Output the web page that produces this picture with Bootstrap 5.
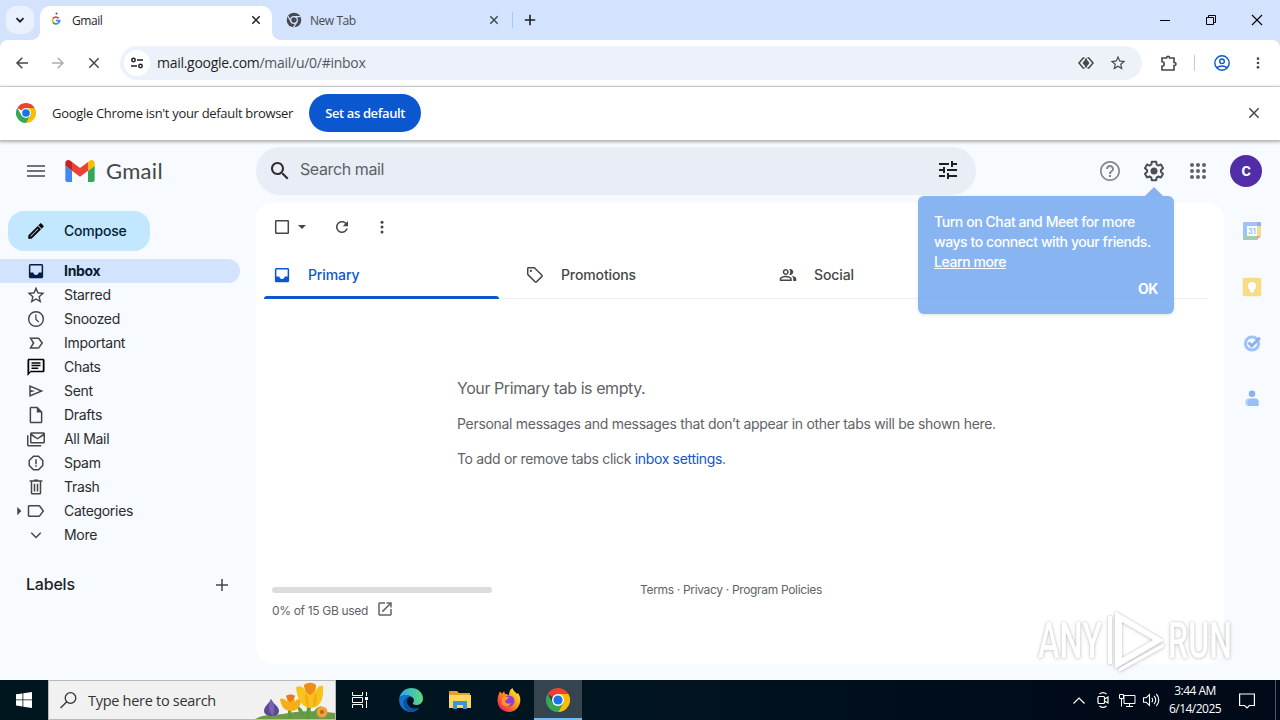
<!DOCTYPE html>
<html lang="en">
<head>
  <meta charset="UTF-8" />
  <meta name="viewport" content="width=device-width, initial-scale=1.0" />
  <title>Gmail</title>
  <link href="https://cdn.jsdelivr.net/npm/bootstrap@5.3.2/dist/css/bootstrap.min.css" rel="stylesheet" />
  <style>
    body { width: 1280px; height: 720px; overflow: hidden; font-family: "Open Sans", sans-serif; color: #1f1f1f; }
    svg { display: block; flex-shrink: 0; fill: currentColor; overflow: visible; }
    .ic-12 { width: 12px; height: 12px; } .ic-16 { width: 16px; height: 16px; }
    .ic-18 { width: 18px; height: 18px; } .ic-20 { width: 20px; height: 20px; }
    .ic-24 { width: 24px; height: 24px; }
    .ln { fill: none; stroke: currentColor; }

    /* browser frame */
    .tabstrip { height: 40px; background: #d3e3fd; font-size: 12px; letter-spacing: -.45px; }
    .tab-list-btn { width: 28px; height: 28px; margin: 6px 6px 0; border-radius: 10px; background: #e9f0fe; }
    .btab { height: 34px; margin-top: 6px; padding-bottom: 6px; }
    .btab-on { position: relative; width: 232px; padding-left: 10px; padding-right: 10px; background: #fff; border-radius: 10px 10px 0 0; }
    .btab-on::before, .btab-on::after { content: ""; position: absolute; bottom: 0; width: 8px; height: 8px; }
    .btab-on::before { left: -8px; background: radial-gradient(circle at 0 0, transparent 7.5px, #fff 8px); }
    .btab-on::after { right: -8px; background: radial-gradient(circle at 100% 0, transparent 7.5px, #fff 8px); }
    .btab-off { width: 240px; padding-left: 14px; padding-right: 12px; color: #474a50; }
    .btab span { padding-top: 1px; }
    .tab-sep { width: 1px; height: 16px; margin-top: 12px; background: #a8c7fa; }
    .win-btn { width: 46px; height: 40px; }
    .frame-bg { background: #d3e3fd; }
    .toolbar { height: 47px; background: #fff; border-radius: 8px 8px 0 0; border-bottom: 1px solid #dfe1e5; color: #474747; }
    .omni { width: 1022px; height: 34px; margin-left: 8px; padding-left: 4px; border-radius: 17px; background: #edf1fa; }
    .site-chip { width: 26px; height: 26px; border-radius: 50%; background: #fff; color: #1f1f1f; }
    .url { font-size: 14px; letter-spacing: -.28px; margin-left: 7px; padding-bottom: 1px; color: #54575b; }
    .url span { color: #1f1f1f; }
    .infobar { height: 53px; padding: 0 20px 1px 16px; font-size: 13px; letter-spacing: -.31px; position: relative; z-index: 1; box-shadow: 0 1px 3px 1px rgba(0,0,0,.3); }
    .btn-default { width: 112px; height: 38px; margin-left: 16px; padding: 1px 0 0; border-radius: 19px; background: #0b57d0; color: #fff; font-size: 13px; font-weight: 600; letter-spacing: -.38px; }

    /* mail app */
    .app { height: 540px; background: #f7fafe; font-family: Inter, sans-serif; font-size: 14px; letter-spacing: -.3px; }
    .app-head { height: 63px; padding-bottom: 2px; }
    .brand { width: 256px; padding-left: 27px; color: #444746; }
    .brand-name { font: 22px Lato, sans-serif; letter-spacing: .3px; margin-left: 11px; color: #444746; }
    .searchbox { width: 720px; height: 48px; padding: 0 16px 0 12px; border-radius: 24px; background: #e9edf6; font-size: 16px; letter-spacing: -.4px; color: #5c6166; }
    .avatar { width: 32px; height: 32px; border-radius: 50%; background: #512da8; color: #fff; font-size: 17px; font-weight: 600; line-height: 1; }
    .side { width: 256px; }
    .btn-compose { width: 142px; height: 40px; margin: 8px 0 8px 8px; padding: 0 0 1px 17px; border-radius: 16px; background: #c2e7ff; color: #001d35; font-weight: 500; font-size: 14px; letter-spacing: -.2px; }
    .folder { width: 240px; height: 24px; padding-left: 27px; color: #2a2c2f; }
    .folder svg { margin-right: 19px; color: #444746; }
    .folder span { padding-bottom: 1px; }
    .folder-on { background: #d3e3fd; border-radius: 0 12px 12px 0; font-weight: 700; color: #001d35; }
    .folder-on svg { color: #041e49; }
    .labels-head { height: 24px; margin-top: 25px; padding: 0 28px 0 26px; font-size: 16px; font-weight: 500; letter-spacing: -.2px; }
    .pane { width: 968px; height: 461px; border-radius: 16px; background: #fff; color: #444746; }
    .pane-tools { height: 48px; padding-left: 17px; }
    .inbox-tabs { height: 48px; margin: 0 16px 0 8px; border-bottom: 1px solid #eceff1; font-weight: 500; letter-spacing: -.12px; }
    .inbox-tab { width: 253px; padding-left: 9px; position: relative; }
    .inbox-tab svg { margin-right: 17px; }
    .inbox-tab-on { color: #0b57d0; }
    .inbox-tab-on::after { content: ""; position: absolute; left: 0; bottom: -1px; width: 235px; height: 3px; border-radius: 3px 3px 0 0; background: #0b57d0; }
    .empty-msg { padding: 77px 0 0 201px; color: #5f6368; line-height: 24px; }
    .empty-msg p { margin-bottom: 11px; letter-spacing: -.3px; }
    .empty-msg .headline { font-size: 16px; letter-spacing: -.43px; margin-bottom: 12px; }
    .empty-msg .hint { letter-spacing: -.33px; }
    .empty-msg a { color: #1155cc; text-decoration: none; }
    .pane-foot { margin-top: 110px; padding-left: 16px; font-size: 12px; letter-spacing: -.33px; color: #5f6368; line-height: 16px; }
    .quota { width: 220px; height: 6px; border-radius: 3px; background: #dadce0; margin-top: 6px; }
    .terms { margin: 1px 0 0 148px; }
    .rail { width: 56px; padding-top: 18px; gap: 36px; opacity: .48; }
    .callout { position: absolute; left: 918px; top: 196px; z-index: 2; width: 256px; height: 118px; padding: 16px; border-radius: 6px; background: rgba(119,170,240,.88); color: #fff; font-family: Inter, sans-serif; font-size: 14px; font-weight: 500; line-height: 20px; letter-spacing: -.42px; box-shadow: 0 1px 3px rgba(60,64,67,.15); }
    .callout::before { content: ""; position: absolute; left: 227px; top: -9px; border: 9px solid transparent; border-top: 0; border-bottom-color: #86b1f1; }
    .callout a { color: #fff; }
    .watermark { position: absolute; left: 1036px; top: 608px; z-index: 3; fill: #fff; opacity: .85; filter: drop-shadow(0 0 1px rgba(0,0,0,.26)) drop-shadow(0 1px 2px rgba(0,0,0,.14)); }

    /* desktop taskbar */
    .taskbar { height: 40px; background: linear-gradient(90deg, #00161f, #00141f 50%, #000a18 85%); color: #fff; }
    .tb-search { width: 288px; height: 40px; background: #f1f1f1; border: 1px solid #b9b9b9; padding-left: 11px; color: #333; font-size: 14.5px; letter-spacing: -.29px; }
    .tb-search span { margin-left: 11px; padding-top: 1px; }
    .tb-start, .tb-view { width: 48px; }
    .tb-view { margin-right: 2px; }
    .tb-item { width: 49px; }
    .tb-on { width: 48px; margin-left: 1px; background: #35444e; border-bottom: 2px solid #76b9ed; padding-top: 2px; }
    .clock { width: 62px; font-size: 12px; letter-spacing: -.52px; line-height: 18px; }
  </style>
</head>
<body class="d-flex flex-column">

  <svg width="0" height="0" class="position-absolute">
    <defs>
      <symbol id="chrome" viewBox="0 0 24 24">
        <path fill="#ea4335" d="M12 12 1.6 6A12 12 0 0 1 22.4 6z" />
        <path fill="#fbbc04" d="M12 12V6h10.4A12 12 0 0 1 12 24l5.2-9z" />
        <path fill="#34a853" d="M12 12 6.8 15 1.6 6A12 12 0 0 0 12 24l5.2-9z" />
        <circle cx="12" cy="12" r="6" fill="#fff" /><circle cx="12" cy="12" r="4.6" fill="#1a73e8" />
      </symbol>
      <symbol id="inbox" viewBox="0 0 24 24"><path d="M19.500 2.500h-15a2 2 0 0 0-2 2v15c0 1.100.9 2 2 2h15c1.100 0 2-.9 2-2v-15c0-1.100-.9-2-2-2zm0 11.500h-4c0 1.900-1.500 3.300-3.500 3.300S8.500 15.900 8.500 14h-4V4.500h15z" /></symbol>
      <symbol id="dots" viewBox="0 0 24 24"><circle cx="12" cy="5.500" r="2" /><circle cx="12" cy="12" r="2" /><circle cx="12" cy="18.500" r="2" /></symbol>
      <symbol id="cross" viewBox="0 0 12 12"><path d="M2.300 2.300l7.400 7.400M9.700 2.300l-7.400 7.400" fill="none" stroke="currentColor" stroke-width="1.500" /></symbol>
      <symbol id="star" viewBox="0 0 24 24"><path d="M22 9.240l-7.190-.620L12 2 9.190 8.630 2 9.240l5.460 4.730L5.820 21 12 17.270 18.180 21l-1.630-7.030L22 9.240zM12 15.400l-3.760 2.270 1-4.280-3.320-2.880 4.380-.380L12 6.100l1.710 4.040 4.380.380-3.320 2.880 1 4.280L12 15.400z" /></symbol>
    </defs>
  </svg>

  <!-- browser tabs -->
  <div class="tabstrip d-flex">
    <div class="tab-list-btn d-flex align-items-center justify-content-center">
      <svg class="ic-12 ln" viewBox="0 0 12 12" stroke-width="1.8"><path d="M2.500 4.200 6 7.700l3.500-3.500" /></svg>
    </div>
    <div class="btab btab-on d-flex align-items-center">
      <svg width="12" height="16" viewBox="0 0 12 16" class="ln" stroke-width="1.800">
        <path stroke="#ea4335" d="M3 6.500A3.600 3.600 0 0 1 8.600 6.300" /><path stroke="#fbbc04" d="M3 6.500a3.600 3.600 0 0 0-.1 3.800" />
        <path stroke="#34a853" d="M2.900 10.300a3.600 3.600 0 0 0 5.300.8" /><path stroke="#4285f4" d="M6 8.600h3.600a3.600 3.600 0 0 1-1.400 2.500" />
        <circle cx="6.500" cy="1.500" r="1" fill="#3949ab" stroke="none" />
      </svg>
      <span class="flex-grow-1" style="margin-left:10px">Gmail</span>
      <svg class="ic-12"><use href="#cross" /></svg>
    </div>
    <div class="btab btab-off d-flex align-items-center">
      <svg width="16" height="16" viewBox="0 0 24 24">
        <circle cx="12" cy="12" r="11" /><circle cx="12" cy="12" r="5" fill="none" stroke="#d3e3fd" stroke-width="1.800" />
        <path d="M12 7h10M7.700 14.500l-5-8.600M16.300 14.500l-5 8.600" stroke="#d3e3fd" stroke-width="1.800" />
      </svg>
      <span class="ms-2 flex-grow-1">New Tab</span>
      <svg class="ic-12"><use href="#cross" /></svg>
    </div>
    <div class="tab-sep"></div>
    <div class="d-flex align-items-center" style="padding-left:11px">
      <svg class="ic-12 ln" viewBox="0 0 12 12" stroke-width="1.6"><path d="M6 .8v10.400M.8 6h10.400" /></svg>
    </div>
    <div class="d-flex align-items-center ms-auto text-black">
      <div class="win-btn d-flex align-items-center justify-content-center"><svg width="10" height="10" class="ln"><path d="M0 5.500h10" /></svg></div>
      <div class="win-btn d-flex align-items-center justify-content-center"><svg width="10" height="10" class="ln"><path d="M.5 2.500h7v7h-7zM2.500 2.500v-2h7v7h-2" /></svg></div>
      <div class="win-btn d-flex align-items-center justify-content-center"><svg width="10" height="10" class="ln" stroke-width="1.1"><path d="M0 0l10 10M10 0L0 10" /></svg></div>
    </div>
  </div>

  <!-- address bar -->
  <div class="frame-bg">
    <div class="toolbar d-flex align-items-center">
      <svg class="ln ms-3" width="12" height="12" viewBox="0 0 12 12" stroke-width="1.500"><path d="M12 6H1M6.300.7 1 6l5.300 5.300" /></svg>
      <svg class="ln" style="margin-left:24px;color:#adadad" width="12" height="12" viewBox="0 0 12 12" stroke-width="1.500"><path d="M0 6h11M5.700.7 11 6l-5.300 5.300" /></svg>
      <svg class="ln" style="margin-left:25px;margin-right:13px" width="10" height="10" viewBox="0 0 10 10" stroke-width="1.500"><path d="M.3.3l9.400 9.400M9.700.3.3 9.700" /></svg>
      <div class="omni d-flex align-items-center">
        <div class="site-chip d-flex align-items-center justify-content-center">
          <svg class="ln" width="12" height="12" viewBox="0 0 12 12" stroke-width="1.500"><circle cx="2.500" cy="3" r="1.700" /><path d="M6 3h6M0 9h6" /><circle cx="9.500" cy="9" r="1.700" /></svg>
        </div>
        <div class="url flex-grow-1"><span>mail.google.com</span>/mail/u/0/#inbox</div>
        <svg class="ln" width="16" height="14" viewBox="0 0 16 14" stroke-width="1.500"><path d="M6.500 2H5.200L1 7l4.200 5h1.300M9.500 2h1.300L15 7l-4.200 5H9.500" /><path d="M8 3.200 11 7l-3 3.800L5 7zM8 2v10" fill="currentColor" stroke-width="1" /></svg>
        <svg class="ic-18" style="margin:0 15px 0 15px"><use href="#star" /></svg>
      </div>
      <svg class="ln" style="margin-left:19px" width="16" height="16" viewBox="0 0 16 16" stroke-width="1.600"><path d="M1 3h4.500V2.500a1.700 1.700 0 0 1 3.200 0V3H13v4.500h.5a1.500 1.500 0 0 1 0 3H13V15H1v-3.800a2.200 2.200 0 0 0 0-4.400z" /></svg>
      <div style="width:1px;height:16px;margin:0 19px 0 17px;background:#c7cdd8"></div>
      <svg class="ln" width="16" height="16" viewBox="0 0 16 16" stroke-width="1.400" style="color:#0b57d0"><circle cx="8" cy="8" r="7.200" /><circle cx="8" cy="6.300" r="2.300" /><path d="M2.800 12.800c2.800-2.500 7.600-2.500 10.400 0" /></svg>
      <svg class="ic-16" style="margin-left:20px"><use href="#dots" /></svg>
    </div>
  </div>

  <!-- default browser prompt -->
  <div class="infobar bg-white d-flex align-items-center">
    <svg class="ic-20"><use href="#chrome" /></svg>
    <span class="ms-3" style="padding-top:1px">Google Chrome isn't your default browser</span>
    <button class="btn btn-default" type="button">Set as default</button>
    <svg class="ln ms-auto" style="color:#474747;margin-right:1px" width="10" height="10" viewBox="0 0 10 10" stroke-width="1.500"><path d="M.3.3l9.400 9.400M9.700.3.3 9.700" /></svg>
  </div>

  <!-- mail -->
  <div class="app d-flex flex-column">
    <div class="app-head d-flex align-items-center">
      <div class="brand d-flex align-items-center">
        <svg class="ln" width="18" height="12" viewBox="0 0 18 12" stroke-width="1.700"><path d="M0 1h18M0 6h18M0 11h18" /></svg>
        <svg style="margin-left:20px" width="30" height="22" viewBox="52 42 88 66">
          <path fill="#4285f4" d="M58 108h14V74L52 59v43c0 3.320 2.690 6 6 6" />
          <path fill="#34a853" d="M120 108h14c3.320 0 6-2.690 6-6V59l-20 15" />
          <path fill="#fbbc04" d="M120 48v26l20-15v-8c0-7.420-8.470-11.650-14.400-7.200" />
          <path fill="#ea4335" d="M72 74V48l24 18 24-18v26L96 92" />
          <path fill="#c5221f" d="M52 51v8l20 15V48l-5.600-4.200c-5.940-4.450-14.400-.22-14.400 7.200" />
        </svg>
        <span class="brand-name">Gmail</span>
      </div>
      <div class="searchbox d-flex align-items-center">
        <svg class="ic-24" style="color:#2b2d30" viewBox="0 0 24 24"><path d="M15.500 14h-.79l-.28-.27C15.410 12.590 16 11.110 16 9.500 16 5.910 13.090 3 9.500 3S3 5.910 3 9.500 5.910 16 9.500 16c1.610 0 3.090-.59 4.230-1.570l.27.28v.79l5 4.990L20.490 19l-4.990-5zm-6 0C7.010 14 5 11.990 5 9.500S7.010 5 9.500 5 14 7.010 14 9.500 11.990 14 9.500 14z" /></svg>
        <span class="ms-2 flex-grow-1 pb-1">Search mail</span>
        <svg class="ic-24" style="color:#1f1f1f;margin-top:-1px" viewBox="0 0 24 24"><path d="M3 17v2h6v-2H3zM3 5v2h10V5H3zm10 16v-2h8v-2h-8v-2h-2v6h2zM7 9v2H3v2h4v2h2V9H7zm14 4v-2H11v2h10zm-6-4h2V7h4V5h-4V3h-2v6z" /></svg>
      </div>
      <div class="d-flex align-items-center ms-auto" style="gap:20px;margin-right:18px;color:#5f6368">
        <svg class="ic-24" style="color:#80868b" viewBox="0 0 24 24"><path d="M11 18h2v-2h-2v2zm1-16C6.480 2 2 6.480 2 12s4.480 10 10 10 10-4.480 10-10S17.520 2 12 2zm0 18.300c-4.580 0-8.300-3.720-8.300-8.300S7.420 3.700 12 3.700s8.300 3.720 8.300 8.300-3.720 8.300-8.300 8.300zM12 6c-2.210 0-4 1.790-4 4h2c0-1.100.9-2 2-2s2 .9 2 2c0 2-3 1.750-3 5h2c0-2.250 3-2.500 3-5 0-2.210-1.790-4-4-4z" /></svg>
        <svg class="ic-24" style="color:#4b4f52" viewBox="0 0 24 24"><path d="M13.850 22.250h-3.700c-.74 0-1.360-.54-1.450-1.270l-.27-1.890c-.27-.14-.53-.29-.79-.46l-1.800.72c-.7.26-1.470-.03-1.810-.65L2.200 15.530c-.35-.66-.2-1.440.36-1.880l1.530-1.190c-.01-.15-.02-.3-.02-.46 0-.15.01-.31.02-.46l-1.520-1.190c-.59-.45-.74-1.260-.37-1.880l1.850-3.190c.34-.62 1.110-.9 1.790-.63l1.810.73c.26-.17.52-.32.78-.46l.27-1.910c.09-.7.71-1.250 1.440-1.250h3.700c.74 0 1.360.54 1.450 1.270l.27 1.890c.27.14.53.29.79.46l1.800-.72c.71-.26 1.480.03 1.820.65l1.840 3.180c.36.66.2 1.440-.36 1.880l-1.520 1.190c.01.15.02.3.02.46s-.01.31-.02.46l1.520 1.190c.56.45.72 1.230.37 1.860l-1.860 3.220c-.34.62-1.110.9-1.800.63l-1.800-.72c-.26.17-.52.32-.78.46l-.27 1.910c-.1.68-.72 1.220-1.460 1.220zm-3.230-2h2.760l.37-2.550.53-.22c.44-.18.88-.44 1.340-.78l.45-.34 2.380.96 1.380-2.400-2.030-1.580.07-.56c.03-.26.06-.51.06-.78s-.03-.53-.06-.78l-.07-.56 2.030-1.580-1.390-2.400-2.390.96-.45-.35c-.42-.32-.87-.58-1.330-.77l-.52-.22-.37-2.550h-2.760l-.37 2.550-.53.21c-.44.19-.88.44-1.340.79l-.45.33-2.380-.95-1.390 2.390 2.030 1.580-.07.56a7 7 0 0 0-.06.79c0 .26.02.53.06.78l.07.56-2.030 1.580 1.380 2.400 2.390-.96.45.35c.43.33.86.58 1.330.77l.53.22.38 2.550z" /><circle cx="12" cy="12" r="3.500" /></svg>
        <svg class="ic-24" viewBox="0 0 24 24"><g id="apps"></g></svg>
        <div class="avatar d-flex align-items-center justify-content-center">c</div>
      </div>
    </div>

    <div class="d-flex flex-grow-1">
      <div class="side">
        <button class="btn btn-compose d-flex align-items-center" type="button">
          <svg class="ic-20" style="color:#000;margin-right:18px" viewBox="0 0 24 24"><path d="M14.060 9.020l.92.92L5.920 19H5v-.92l9.060-9.060M17.660 3c-.25 0-.51.1-.7.29l-1.830 1.830 3.750 3.750 1.830-1.830c.39-.39.39-1.020 0-1.410l-2.340-2.340c-.2-.2-.45-.29-.71-.29zm-3.600 3.190L3 17.250V21h3.750L17.810 9.940l-3.750-3.750z" stroke="#000" stroke-width=".5" /></svg>
          Compose
        </button>
        <div id="folders"></div>
        <div class="labels-head d-flex align-items-center justify-content-between">
          Labels
          <svg class="ln" style="color:#444746;margin-top:1px" width="12" height="12" viewBox="0 0 12 12" stroke-width="1.500"><path d="M6 0v12M0 6h12" /></svg>
        </div>
      </div>

      <main class="pane">
        <div class="pane-tools d-flex align-items-center">
          <svg class="ic-18 ln" viewBox="0 0 18 18" stroke-width="1.500"><rect x="2.700" y="2.700" width="12.600" height="12.600" rx=".5" /></svg>
          <svg style="margin-left:7px" width="8" height="4"><path d="M0 0h8L4 4z" /></svg>
          <svg class="ic-18" style="margin-left:27px" viewBox="0 0 24 24"><path d="M17.650 6.350C16.200 4.900 14.210 4 12 4c-4.420 0-7.990 3.580-7.990 8s3.570 8 7.990 8c3.730 0 6.840-2.550 7.730-6h-2.080c-.82 2.330-3.040 4-5.650 4-3.310 0-6-2.690-6-6s2.690-6 6-6c1.660 0 3.140.69 4.220 1.780L13 11h7V4l-2.350 2.350z" /></svg>
          <svg class="ic-18" style="margin-left:22px"><use href="#dots" /></svg>
        </div>
        <div class="inbox-tabs d-flex">
          <div class="inbox-tab inbox-tab-on d-flex align-items-center">
            <svg class="ic-18"><use href="#inbox" /></svg>Primary
          </div>
          <div class="inbox-tab d-flex align-items-center">
            <svg class="ic-18" viewBox="0 0 24 24"><path d="M21.900 11.600l-9.700-9.700C11.800 1.500 11.300 1.300 10.700 1.300H3.300c-1.100 0-2 .9-2 2v7.400c0 .6.2 1.100.6 1.500l9.700 9.700c.4.4.9.6 1.400.6s1.100-.2 1.500-.6l7.400-7.400c.4-.4.600-.900.600-1.400 0-.6-.2-1.100-.6-1.500zM13 20.500l-9.700-9.700V3.300h7.500l9.700 9.700-7.500 7.500z" /><circle cx="6.500" cy="6.500" r="1.500" /></svg>Promotions
          </div>
          <div class="inbox-tab d-flex align-items-center">
            <svg class="ic-18" viewBox="0 0 24 24"><path d="M16.670 13.130C18.040 14.060 19 15.320 19 17v3h4v-3c0-2.180-3.570-3.470-6.330-3.870zM15 12c2.210 0 4-1.790 4-4s-1.790-4-4-4c-.47 0-.91.1-1.330.24C14.500 5.270 15 6.580 15 8s-.5 2.730-1.330 3.760c.42.14.86.24 1.330.24zM9 12c2.210 0 4-1.790 4-4s-1.790-4-4-4-4 1.790-4 4 1.790 4 4 4zm0-6c1.100 0 2 .9 2 2s-.9 2-2 2-2-.9-2-2 .9-2 2-2zm0 7c-2.670 0-8 1.340-8 4v3h16v-3c0-2.660-5.330-4-8-4zm6 5H3v-.99C3.200 16.290 6.300 15 9 15s5.800 1.290 6 2v1z" /></svg>Social
          </div>
        </div>
        <div class="empty-msg">
          <p class="headline">Your Primary tab is empty.</p>
          <p>Personal messages and messages that don’t appear in other tabs will be shown here.</p>
          <p class="hint">To add or remove tabs click <a href="#">inbox settings</a>.</p>
        </div>
        <div class="pane-foot d-flex">
          <div>
            <div class="quota"></div>
            <div class="d-flex align-items-center" style="gap:8px;margin-top:10px">0% of 15 GB used
              <svg class="ic-18" style="margin-top:-4px" viewBox="0 0 24 24"><path d="M19 19H5V5h7V3H5c-1.110 0-2 .9-2 2v14c0 1.100.89 2 2 2h14c1.100 0 2-.9 2-2v-7h-2v7zM14 3v2h3.590l-9.830 9.830 1.410 1.410L19 6.410V10h2V3h-7z" /></svg>
            </div>
          </div>
          <div class="terms">Terms · Privacy · Program Policies</div>
        </div>
      </main>

      <div class="rail d-flex flex-column align-items-center">
        <svg class="ic-20" viewBox="0 0 20 20"><path fill="#4285f4" d="M1 2a1 1 0 0 1 1-1h13v4H5v10H1z" /><path fill="#1967d2" d="M15 1h3a1 1 0 0 1 1 1v3h-4z" /><path fill="#fbbc04" d="M15 5h4v10h-4z" /><path fill="#34a853" d="M5 15h10v4H2a1 1 0 0 1-1-1v-3z" /><path fill="#ea4335" d="M15 15h4l-4 4z" /><path fill="#fff" d="M5 5h10v10H5z" /><text x="10" y="12.800" font-size="7.500" font-weight="600" letter-spacing="0" text-anchor="middle" fill="#1a73e8">31</text></svg>
        <svg class="ic-20" viewBox="0 0 20 20"><rect x=".7" y=".7" width="18.600" height="18.600" rx="2" fill="#fbbc04" /><circle cx="10" cy="9" r="4" fill="#fff" /><path fill="#fff" d="M8 12h4v3.500H8z" /></svg>
        <svg class="ic-20 ln" viewBox="0 0 20 20" stroke-width="3"><circle cx="10" cy="10.500" r="6.600" stroke="#4285f4" /><path stroke="#1967d2" d="M6.500 9.500l3.300 3.300 8-8" /></svg>
        <svg class="ic-20" viewBox="0 0 20 20"><circle cx="10" cy="4.800" r="3.300" fill="#1967d2" /><path fill="#669df6" d="M3.500 12.500c0-2 1.500-3 3.500-3h6c2 0 3.500 1 3.500 3V17h-10c-2 0-3-1-3-2.500z" /><path fill="#1a73e8" d="M6 13.500c0-2.500 1.500-4 4-4h3c2 0 3.500 1 3.500 3V17H6z" opacity=".7" /></svg>
      </div>
    </div>
  </div>

  <div class="callout">
    Turn on Chat and Meet for more<br />ways to connect with your friends.<br /><a href="#">Learn more</a>
    <div class="text-end fw-bold" style="margin-top:7px">OK</div>
  </div>

  <svg class="watermark" width="200" height="64">
    <g font-family="Roboto, sans-serif" font-size="50" font-weight="500">
      <text x="2" y="50" textLength="64" lengthAdjust="spacingAndGlyphs">ANY</text>
      <text x="132" y="50" textLength="64" lengthAdjust="spacingAndGlyphs">RUN</text>
    </g>
    <path d="M79 3 128 32 79 61zM86 14v36l31-18z" fill-rule="evenodd" />
    <path d="M72 8v48h4V8zM83 64l45-25v-4L83 60z" />
  </svg>

  <!-- taskbar -->
  <div class="taskbar d-flex">
    <div class="tb-start d-flex align-items-center justify-content-center">
      <svg width="16" height="16" viewBox="0 0 16 16"><path d="M0 2.300 6.500 1.400v6.100H0zM7.300 1.300 16 0v7.500H7.300zM0 8.300h6.500v6.200L0 13.600zM7.300 8.300H16V16l-8.700-1.300z" /></svg>
    </div>
    <div class="tb-search d-flex align-items-center">
      <svg class="ln" width="17" height="17" viewBox="0 0 17 17" stroke-width="1.300"><circle cx="10.500" cy="6" r="5.300" /><path d="M6.800 9.800.5 16" /></svg>
      <span class="flex-grow-1">Type here to search</span>
      <svg width="80" height="38" viewBox="0 0 80 38">
        <path fill="#6d9a4a" d="M0 38c8-5 20-4 28-5 12-3 32-4 52-1v6z" />
        <path fill="#5b4a93" d="M16 18c2 5 8 7 8 12 0 4-4 5-7 5s-8-1-8-5c0-5 5-7 7-12z" /><path fill="#7a62b3" d="M16 18c4 5 4 11 2 17-5-4-5-11-2-17z" />
        <path fill="#5d9c3c" d="M33 28h3l1 10h-4zM52 25h4l-1 13h-4zM57 34c2-5 5-8 9-9-1 5-4 9-9 11zM50 36c-1-6-4-10-8-11 1 5 3 9 8 11z" />
        <path fill="#f6ae13" d="M25 18c4-1 6 1 7 3 0-4 2-6 4-7 2 2 4 4 4 7 1-2 3-4 6-3 0 7-3 12-10 12s-10-5-11-12z" />
        <path fill="#e97a17" d="M31 15c2-2 7-2 9 0-1 3-2 5-5 6-2-1-3-3-4-6z" />
        <path fill="#f9c21b" d="M41 6c4-2 8 0 9 4 0-4 2-7 5-8 4 1 6 4 6 8 1-4 4-6 7-5 1 13-3 22-12 22S42 18 41 6z" />
        <path fill="#ef8d18" d="M49 4c3-3 9-3 12 0 0 4-2 8-6 10-4-2-6-6-6-10z" /><path fill="#f5ad17" d="M51 12c3 3 3 8 3 14-4-3-5-8-3-14zM61 12c-3 3-3 8-3 14 4-3 5-8 3-14z" />
        <circle cx="67" cy="31" r="5.500" fill="#f2a137" /><circle cx="67" cy="31" r="2" fill="#b4651d" />
      </svg>
    </div>
    <div class="tb-view d-flex align-items-center justify-content-center">
      <svg class="ln" width="16" height="16" viewBox="0 0 16 16"><path d="M.5 0v3.500h10V0M.5 16v-3.500h10V16M.5 5.500h10v5H.5zM14.500 0v4M14.500 8.500V16" /><path d="M13 5h3v3h-3z" fill="#fff" stroke="none" /></svg>
    </div>
    <div class="tb-item d-flex align-items-center justify-content-center">
      <svg class="ic-24" viewBox="0 0 24 24">
        <defs><linearGradient id="eg" x1="0" x2="1"><stop offset="0" stop-color="#2aa5e8" /><stop offset="1" stop-color="#5fdb7c" /></linearGradient></defs>
        <path fill="url(#eg)" d="M.3 10C1.500 4 6.500 0 12.200 0 19 0 24 5 24 10.500c0 4-3 6.500-6.500 6.500-2.500 0-4-1-3.500-2 1.500-1.500 1.500-5-2-6.500C8 6.500 2.500 7 .3 10z" />
        <path fill="#1373cf" d="M.3 10C3 6.500 8.500 6.500 11.500 8.300c-3 .7-4.300 4-3.300 7.200 1.300 4 6 6.500 11.800 4.600C18 22.800 15 24 12 24 4.500 24-.8 17.500.3 10z" />
        <path fill="#0c4f9e" d="M8.200 15.500C7 12 8.500 9 11.500 8.300c-5 .2-8 4.700-6.800 9C6 21.500 9 24 12 24c3 0 6-1.200 8-3.900-5.800 1.900-10.500-.6-11.800-4.600z" />
      </svg>
    </div>
    <div class="tb-item d-flex align-items-center justify-content-center">
      <svg width="22" height="18" viewBox="0 0 22 18"><path fill="#e7a022" d="M0 1a1 1 0 0 1 1-1h7l2 2h11v4H0z" /><path fill="#ffd75e" d="M0 4h22v13H0z" /><path fill="#3c94d4" d="M4 10h14v8h-4v-4H8v4H4z" /></svg>
    </div>
    <div class="tb-item d-flex align-items-center justify-content-center">
      <svg class="ic-24" viewBox="0 0 24 24">
        <defs><linearGradient id="fg" x1="1" x2="0" y1="0" y2="1"><stop offset=".15" stop-color="#ffe226" /><stop offset=".5" stop-color="#ff8a16" /><stop offset=".9" stop-color="#f5156c" /></linearGradient></defs>
        <path fill="url(#fg)" d="M3 3.500c.7 1 1.500 1.700 2.500 2L7 3l1 3c2 0 3 .5 4 1.500C12 4 13 1.500 15.500 0c.3 2.500 3 4 4.500 6l1-1c2 3 2.800 6 2 9.500C21.800 20 17.500 24 12 24 5.500 24 .5 19 .5 12.500.5 9 1.500 6 3 3.500z" />
        <circle cx="12" cy="13" r="5.500" fill="#8b3fd6" /><path fill="#ff9a1f" d="M5 10c2-2 5-2 7.500 0-2 0-2.500 2-4.500 2.500 0 3 3 4 6 2.500-1.500 4-7 4.500-9.500 1z" />
      </svg>
    </div>
    <div class="tb-on d-flex align-items-center justify-content-center"><svg class="ic-24"><use href="#chrome" /></svg></div>

    <div class="d-flex align-items-center ms-auto">
      <svg class="ln" width="12" height="7" viewBox="0 0 12 7" stroke-width="1.200"><path d="M.5 6.500 6 1l5.500 5.500" /></svg>
      <svg class="ln" style="margin-left:12px" width="12" height="16" viewBox="0 0 12 16" stroke-width="1.200"><rect x="1" y="4.500" width="6.500" height="7" rx="1" /><path d="M7.500 7 11 5v6L7.500 9M2.500 2C4.500.3 7.500.3 9.500 2M2.500 14c2 1.700 5 1.700 7 0" /></svg>
      <svg class="ln" style="margin-left:10px" width="17" height="14" viewBox="0 0 17 14"><path d="M5 2.500h11v8H5zM7 13.500h7M10.500 10.500v3M.5 1.500h4v4h-4zM2.500 5.500v8" /></svg>
      <svg class="ln" style="margin-left:7px" width="17" height="14" viewBox="0 0 17 14" stroke-width="1.100"><path d="M.5 4.800h2.700L6.500 1.500v11L3.200 9.200H.5zM8.700 4.800a3 3 0 0 1 0 4.400M11 2.800a6 6 0 0 1 0 8.400M13.300 1a8.500 8.500 0 0 1 0 12" /></svg>
      <div class="clock text-center" style="margin-left:4px">3:44 AM<br />6/14/2025</div>
      <svg class="ln" style="margin:1px 20px 0 13px" width="16" height="16" viewBox="0 0 16 16" stroke-width="1.200"><path d="M.6 1h14.800v11.500h-5L8 15l-2.400-2.500h-5z" /></svg>
      <div style="width:1px;height:40px;margin-right:4px;background:#4d5866"></div>
    </div>
  </div>

  <script src="https://cdn.jsdelivr.net/npm/bootstrap@5.3.2/dist/js/bootstrap.bundle.min.js"></script>
  <script>
    const folders = [
      ["Inbox", '<use href="#inbox" />'],
      ["Starred", '<path transform="translate(-1.800 -1.500) scale(1.150)" d="M22 9.240l-7.190-.620L12 2 9.190 8.630 2 9.240l5.460 4.730L5.820 21 12 17.270 18.180 21l-1.630-7.030L22 9.240zM12 15.400l-3.760 2.270 1-4.280-3.320-2.880 4.380-.380L12 6.100l1.710 4.040 4.380.380-3.320 2.880 1 4.280L12 15.400z" />'],
      ["Snoozed", '<path d="M12 1.300a10.700 10.700 0 1 0 0 21.400 10.700 10.700 0 0 0 0-21.400zM12 20.800a8.800 8.800 0 1 1 0-17.600 8.800 8.800 0 0 1 0 17.600zM12.700 6H11v6.700l4 3.800 1.200-1.200-3.500-3.300z" />'],
      ["Important", '<path d="M15 19.500H3L7.500 12 3 4.500h12c.65 0 1.260.31 1.630.84L21.500 12l-4.870 6.660c-.37.520-.98.84-1.630.84zm-8.500-2H15l4-5.500-4-5.500H6.500l3.500 5.500-3.500 5.500z" />'],
      ["Chats", '<path fill="#000" d="M3 3h18v14H5L3 19V3m-.500-2C1.400 1 .6 1.900.6 3v21L5 19h16.500c1.100 0 1.900-.9 1.900-2V3c0-1.100-.8-2-1.900-2zM6 12.500h9v2H6zM6 9h12v2H6zM6 5.500h12v2H6z" />'],
      ["Sent", '<path d="M3 20V4l19 8-19 8zm2-3l11.850-5L5 7v3.500l6 1.500-6 1.500V17z" />'],
      ["Drafts", '<path d="M14 1H5.500c-1.100 0-2 .9-2 2v18c0 1.100.9 2 2 2h13c1.100 0 2-.9 2-2V7.500zM5.500 21V3H13v5.500h5.500V21z" />'],
      ["All Mail", '<path d="M22 3H6a2 2 0 0 0-2 2v11c0 1.100.9 2 2 2h16c1.100 0 2-.9 2-2V5a2 2 0 0 0-2-2zm0 13H6V7.500l8 5 8-5zm-8-5.500L6.500 5h15zM2 7H0v13c0 1.100.9 2 2 2h17v-2H2z" />'],
      ["Spam", '<path fill-rule="evenodd" d="M15.730 2H8.270L2 8.270v7.460L8.270 22h7.460L22 15.730V8.270zM20 14.900 14.900 20H9.100L4 14.900V9.100L9.100 4h5.800L20 9.100zM11 7h2v6.500h-2zM11 15h2v2h-2z" />'],
      ["Trash", '<path d="M15 3V2H9v1H3.500v2H5v15c0 1.100.9 2 2 2h10c1.100 0 2-.9 2-2V5h1.500V3zm2 17H7V5h10zM9 7.500h2V18H9zm4 0h2V18h-2z" />'],
      ["Categories", '<path d="M17.600 4.800C17.200 4.300 16.600 4 16 4H3C1.900 4 1 4.900 1 6v12c0 1.100.9 2 2 2h13c.67 0 1.270-.33 1.630-.84L23 12zM16 18H3V6h13l4.500 6z" /><path d="M-13 6.500-7.500 12l-5.500 5.500z" />'],
      ["More", '<path d="M6.400 8.300 12 13.900l5.600-5.600L19 9.700l-7 7-7-7z" />']
    ];
    document.getElementById("folders").innerHTML = folders.map(([name, icon], i) => `
      <div class="folder d-flex align-items-center ${i === 0 ? "folder-on" : ""}">
        <svg class="ic-18" viewBox="0 0 24 24">${icon}</svg><span>${name}</span>
      </div>`).join("");

    // 3x3 launcher grid
    let dots = "";
    for (let y = 6; y <= 18; y += 6) {
      for (let x = 6; x <= 18; x += 6) dots += `<circle cx="${x}" cy="${y}" r="2" />`;
    }
    document.getElementById("apps").innerHTML = dots;
  </script>
</body>
</html>
